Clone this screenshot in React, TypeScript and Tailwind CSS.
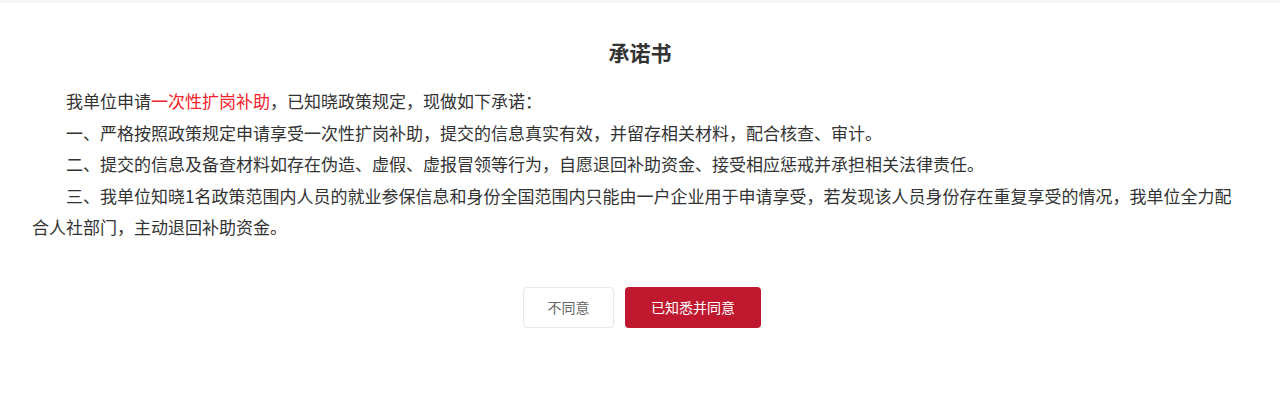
const lines = [
  "一、严格按照政策规定申请享受一次性扩岗补助，提交的信息真实有效，并留存相关材料，配合核查、审计。",
  "二、提交的信息及备查材料如存在伪造、虚假、虚报冒领等行为，自愿退回补助资金、接受相应惩戒并承担相关法律责任。",
  "三、我单位知晓1名政策范围内人员的就业参保信息和身份全国范围内只能由一户企业用于申请享受，若发现该人员身份存在重复享受的情况，我单位全力配合人社部门，主动退回补助资金。",
];

const App = () => {
  return (
    <div
      className="min-h-[412px] bg-white text-[#333]"
      style={{ fontFamily: '"Microsoft YaHei", "Noto Sans CJK SC", "Liberation Sans", sans-serif' }}
    >
      <div className="h-[3px] bg-[#f5f6f8]" />
      <div className="px-[32px] pt-[35px]">
        <h1 className="text-center text-[21px] font-bold leading-[28px] text-[#333]">承诺书</h1>
        <div className="mt-[19px] text-[17px] leading-[31.5px]">
          <p className="indent-[34px]">
            我单位申请<span className="text-[#f5222d]">一次性扩岗补助</span>，已知晓政策规定，现做如下承诺：
          </p>
          {lines.map((t) => (
            <p key={t} className="indent-[34px]">
              {t}
            </p>
          ))}
        </div>
        <div className="mt-[44px] flex justify-center gap-[11px] pl-[4px]">
          <button className="h-[41px] w-[91px] rounded border border-[#e4e7ed] bg-white text-[14px] text-[#666]">
            不同意
          </button>
          <button className="h-[41px] w-[136px] rounded bg-[#c0192f] text-[14px] text-white">
            已知悉并同意
          </button>
        </div>
      </div>
    </div>
  );
};

export default App;
